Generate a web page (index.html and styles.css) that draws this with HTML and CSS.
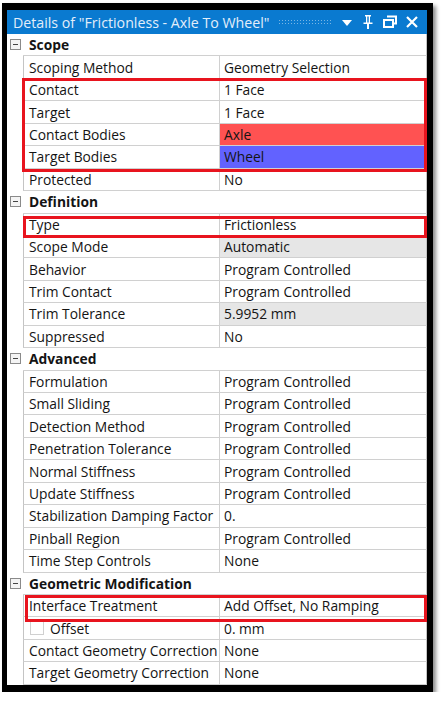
FILE: index.html
```html
<!DOCTYPE html>
<html lang="en">
<head>
  <meta charset="UTF-8" />
  <title>Details of "Frictionless - Axle To Wheel"</title>
  <link rel="stylesheet" href="styles.css">
</head>
<body>
  <div class="panel">
    <div class="titlebar">
      <span class="title">Details of "Frictionless - Axle To Wheel"</span>
      <span class="grip"></span>
      <svg class="ico" width="14" height="14" viewBox="0 0 14 14"><path d="M2 5h10l-5 6z" fill="#fff"/></svg>
      <svg class="ico" width="14" height="16" viewBox="0 0 14 16"><path d="M4 1h6v1.5H9v6h2.5V10H8v5H6v-5H2.5V8.5H5v-6H4zM6.3 2.5v6h1.4v-6z" fill="#fff"/></svg>
      <svg class="ico" width="16" height="14" viewBox="0 0 16 14"><path d="M5 1.5h9v7h-3M2 5h9v7H2z" fill="none" stroke="#fff" stroke-width="2"/></svg>
      <svg class="ico" width="14" height="14" viewBox="0 0 14 14"><path d="M2 2l10 10M12 2L2 12" stroke="#fff" stroke-width="2.2"/></svg>
    </div>

    <div class="table">
      <div class="row head"><span class="tog"></span><span class="label">Scope</span></div>
      <div class="row"><span></span><span class="name">Scoping Method</span><span class="val">Geometry Selection</span></div>
      <div class="row"><span></span><span class="name">Contact</span><span class="val">1 Face</span></div>
      <div class="row"><span></span><span class="name">Target</span><span class="val">1 Face</span></div>
      <div class="row"><span></span><span class="name">Contact Bodies</span><span class="val red">Axle</span></div>
      <div class="row"><span></span><span class="name">Target Bodies</span><span class="val blue">Wheel</span></div>
      <div class="row"><span></span><span class="name">Protected</span><span class="val">No</span></div>

      <div class="row head"><span class="tog"></span><span class="label">Definition</span></div>
      <div class="row"><span></span><span class="name">Type</span><span class="val">Frictionless</span></div>
      <div class="row"><span></span><span class="name">Scope Mode</span><span class="val grey">Automatic</span></div>
      <div class="row"><span></span><span class="name">Behavior</span><span class="val">Program Controlled</span></div>
      <div class="row"><span></span><span class="name">Trim Contact</span><span class="val">Program Controlled</span></div>
      <div class="row"><span></span><span class="name">Trim Tolerance</span><span class="val grey">5.9952 mm</span></div>
      <div class="row"><span></span><span class="name">Suppressed</span><span class="val">No</span></div>

      <div class="row head"><span class="tog"></span><span class="label">Advanced</span></div>
      <div class="row"><span></span><span class="name">Formulation</span><span class="val">Program Controlled</span></div>
      <div class="row"><span></span><span class="name">Small Sliding</span><span class="val">Program Controlled</span></div>
      <div class="row"><span></span><span class="name">Detection Method</span><span class="val">Program Controlled</span></div>
      <div class="row"><span></span><span class="name">Penetration Tolerance</span><span class="val">Program Controlled</span></div>
      <div class="row"><span></span><span class="name">Normal Stiffness</span><span class="val">Program Controlled</span></div>
      <div class="row"><span></span><span class="name">Update Stiffness</span><span class="val">Program Controlled</span></div>
      <div class="row"><span></span><span class="name">Stabilization Damping Factor</span><span class="val">0.</span></div>
      <div class="row"><span></span><span class="name">Pinball Region</span><span class="val">Program Controlled</span></div>
      <div class="row"><span></span><span class="name">Time Step Controls</span><span class="val">None</span></div>

      <div class="row head"><span class="tog"></span><span class="label">Geometric Modification</span></div>
      <div class="row"><span></span><span class="name">Interface Treatment</span><span class="val">Add Offset, No Ramping</span></div>
      <div class="row"><span></span><span class="name sub"><span class="check"></span>Offset</span><span class="val">0. mm</span></div>
      <div class="row"><span></span><span class="name">Contact Geometry Correction</span><span class="val">None</span></div>
      <div class="row"><span></span><span class="name">Target Geometry Correction</span><span class="val">None</span></div>

      <!-- red annotation boxes -->
      <div class="mark mark-scope"></div>
      <div class="mark mark-type"></div>
      <div class="mark mark-iface"></div>
    </div>
  </div>
</body>
</html>
```

FILE: styles.css
```css
* {
  margin: 0;
  padding: 0;
  box-sizing: border-box;
}

body {
  background: #fff;
  padding: 3px 0 0 2px;
  font-family: "Open Sans", "Noto Sans", sans-serif;
  font-size: 13.8px;
  color: #141414;
}

.panel {
  width: 431px;
  border-style: solid;
  border-color: #000;
  border-width: 7px 6px 7px 5px;
  box-shadow: 3px 3px 4px rgba(0, 0, 0, 0.45);
}

.titlebar {
  height: 24px;
  background: #0a7ad0;
  display: flex;
  align-items: center;
  padding: 0 8px 0 6px;
  gap: 7px;
}

.title {
  color: #e3eefa;
  font-size: 14.2px;
  white-space: nowrap;
}

.grip {
  flex: 1;
  height: 6px;
  margin: 0 2px 0 2px;
  background-image: radial-gradient(circle, rgba(255, 255, 255, 0.45) 0.6px, transparent 0.9px);
  background-size: 3px 3px;
}

.ico {
  display: block;
  flex: none;
}

.table {
  position: relative;
  display: grid;
  grid-auto-rows: 22.45px;
}

.row {
  display: grid;
  grid-template-columns: 16px 197px 1fr;
  align-items: stretch;
}

.name, .val, .label {
  display: flex;
  align-items: center;
  white-space: nowrap;
  border-bottom: 1.5px solid #d0d0d0;
}

.name {
  border-left: 1.5px solid #c4c4c4;
  border-right: 1.5px solid #d0d0d0;
  padding-left: 5px;
}

.val {
  padding-left: 4px;
  border-right: 1.5px solid #c4c4c4;
}

.head .label {
  grid-column: 2 / 4;
  font-weight: bold;
  padding-left: 6px;
  border-right: 1.5px solid #c4c4c4;
}

.tog {
  width: 11px;
  height: 11px;
  margin: 5px 0 0 3px;
  border: 1px solid #8a8a8a;
  background: linear-gradient(#444, #444) center / 5px 1px no-repeat, #f4f4f4;
}

.grey { background: #e6e6e6; }
.red { background: #ff5252; }
.blue { background: #6262ff; }

.sub {
  padding-left: 6px;
}

.check {
  width: 14px;
  height: 14px;
  border: 1px solid #d0d0d0;
  background: #fff;
  margin-right: 6px;
}

.mark {
  position: absolute;
  border: 3px solid #e8141e;
}

.mark-scope {
  left: 15px;
  top: 44px;
  width: 405px;
  height: 94px;
}

.mark-type {
  left: 16px;
  top: 182px;
  width: 404px;
  height: 22px;
}

.mark-iface {
  left: 18px;
  top: 561px;
  width: 402px;
  height: 27px;
}
```
